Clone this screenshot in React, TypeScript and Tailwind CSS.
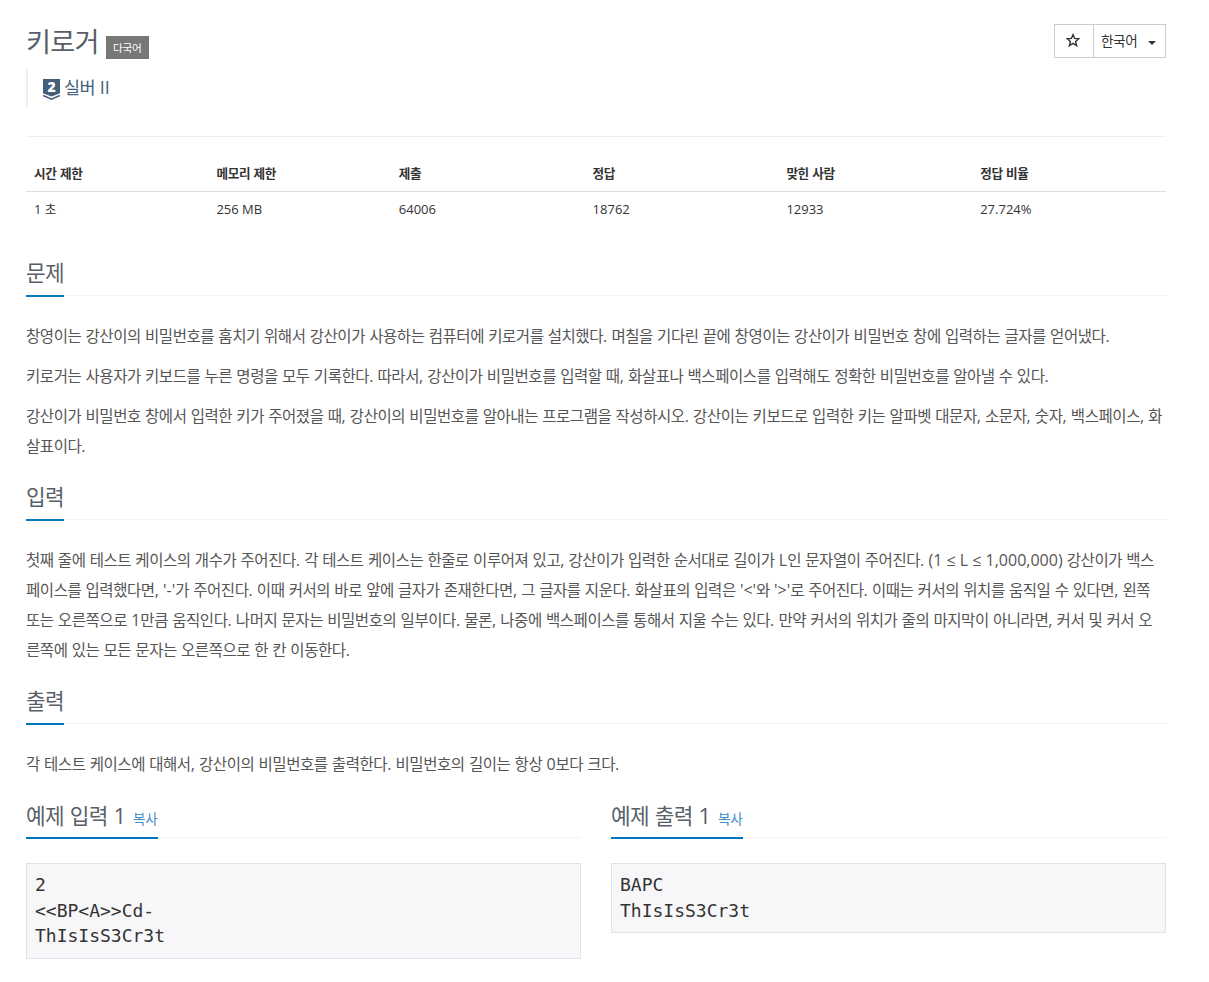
import React from "react";

function Ko({ children }: { children: string }) {
  const parts = children.split(/([\uac00-\ud7a3]+)/).filter(Boolean);
  return (
    <span className="whitespace-pre">
      {parts.map((p, i) =>
        /[\uac00-\ud7a3]/.test(p) ? (
          <span key={i} className="text-[0.97em] tracking-[-0.0283em]">{p}</span>
        ) : (
          <React.Fragment key={i}>{p}</React.Fragment>
        )
      )}
    </span>
  );
}

function Headline({ title, copy }: { title: string; copy?: boolean }) {
  return (
    <div className="flex h-[35px] border-b border-dotted border-[#e4e9f0]">
      <h2
        className={
          copy
            ? "flex h-[36px] items-baseline border-b-2 border-[#0076c0] text-[22px] leading-[24px] text-[#585f69]"
            : "flex h-[36px] items-baseline border-b-2 border-[#0076c0] text-[22px] leading-[22px] text-[#585f69]"
        }
      >
        <Ko>{title}</Ko>
        {copy && (
          <a href="#" className="ml-[7px] pr-px text-[14px] text-[#428bca]">
            <Ko>복사</Ko>
          </a>
        )}
      </h2>
    </div>
  );
}

function Para({ lines }: { lines: string[] }) {
  return (
    <p className="mb-[10px] text-base leading-[30px] text-[#555]">
      {lines.map((line) => (
        <span key={line} className="block">
          <Ko>{line}</Ko>
        </span>
      ))}
    </p>
  );
}

function Section({ title, paragraphs }: { title: string; paragraphs: string[][] }) {
  return (
    <section className="-mr-px pb-[14px]">
      <Headline title={title} />
      <div className="pt-[25px]">
        {paragraphs.map((p) => (
          <Para key={p[0]} lines={p} />
        ))}
      </div>
    </section>
  );
}

function Sample({ title, text }: { title: string; text: string }) {
  return (
    <section className="w-[555px]">
      <Headline title={title} copy />
      <pre className="mt-[25px] border border-[#e1e1e8] bg-[#f7f7f9] px-2 pt-2 pb-[9px] font-['DejaVu_Sans_Mono',monospace] text-[18px] leading-[25.7px] text-[#333]">
        {text}
      </pre>
    </section>
  );
}

const stats = [
  ["시간 제한", "1 초"],
  ["메모리 제한", "256 MB"],
  ["제출", "64006"],
  ["정답", "18762"],
  ["맞힌 사람", "12933"],
  ["정답 비율", "27.724%"],
];

const problem = [
  ["창영이는 강산이의 비밀번호를 훔치기 위해서 강산이가 사용하는 컴퓨터에 키로거를 설치했다. 며칠을 기다린 끝에 창영이는 강산이가 비밀번호 창에 입력하는 글자를 얻어냈다."],
  ["키로거는 사용자가 키보드를 누른 명령을 모두 기록한다. 따라서, 강산이가 비밀번호를 입력할 때, 화살표나 백스페이스를 입력해도 정확한 비밀번호를 알아낼 수 있다."],
  [
    "강산이가 비밀번호 창에서 입력한 키가 주어졌을 때, 강산이의 비밀번호를 알아내는 프로그램을 작성하시오. 강산이는 키보드로 입력한 키는 알파벳 대문자, 소문자, 숫자, 백스페이스, 화",
    "살표이다.",
  ],
];

const input = [
  [
    "첫째 줄에 테스트 케이스의 개수가 주어진다. 각 테스트 케이스는 한줄로 이루어져 있고, 강산이가 입력한 순서대로 길이가 L인 문자열이 주어진다. (1 ≤ L ≤ 1,000,000) 강산이가 백스",
    "페이스를 입력했다면, '-'가 주어진다. 이때 커서의 바로 앞에 글자가 존재한다면, 그 글자를 지운다. 화살표의 입력은 '<'와 '>'로 주어진다. 이때는 커서의 위치를 움직일 수 있다면, 왼쪽",
    "또는 오른쪽으로 1만큼 움직인다. 나머지 문자는 비밀번호의 일부이다. 물론, 나중에 백스페이스를 통해서 지울 수는 있다. 만약 커서의 위치가 줄의 마지막이 아니라면, 커서 및 커서 오",
    "른쪽에 있는 모든 문자는 오른쪽으로 한 칸 이동한다.",
  ],
];

const output = [["각 테스트 케이스에 대해서, 강산이의 비밀번호를 출력한다. 비밀번호의 길이는 항상 0보다 크다."]];

export default function App() {
  return (
    <main className="h-[982px] w-[1209px] overflow-hidden bg-white pl-[26px] pr-[43px] pt-6 font-['Open_Sans','Noto_Sans_CJK_KR',sans-serif] text-[#333]">
      <header className="flex h-[113px] justify-between border-b border-[#eee]">
        <div>
          <div className="flex h-[45px] items-start">
            <h1 className="text-[28px] leading-[35px] text-[#585f69]">
              <Ko>키로거</Ko>
            </h1>
            <span className="mt-3 ml-[7px] flex h-[23px] w-[43px] items-center justify-center bg-[#777] pt-px text-[11px] text-white">
              <Ko>다국어</Ko>
            </span>
          </div>
          <div className="flex h-[38px] items-center gap-1 border-l-2 border-[#eee] pl-[15px] text-[18px] text-[#435f7a]">
            <svg className="mt-1 h-[22px] w-[17px] overflow-visible" viewBox="0 0 17 22">
              <path fill="#435f7a" d="M0 0h17v14.2l-8.5 3.3L0 14.2z" />
              <path fill="none" stroke="#435f7a" strokeWidth="1.6" d="M.2 16.5l8.3 3.7 8.3-3.7" />
              <text x="8.5" y="13" textAnchor="middle" fill="#fff" fontSize="14" fontWeight="800" fontFamily="Open Sans">2</text>
            </svg>
            <span className="mb-0.5"><Ko>실버 II</Ko></span>
          </div>
        </div>
        <div className="flex h-[34px] w-[112px] border border-[#ccc] text-[14px]">
          <button className="flex w-[39px] items-center justify-center border-r border-[#ccc] pr-0.5 pb-0.5">
            <svg className="h-[14px] w-[14px]" viewBox="0 0 14 14" fill="none" stroke="#333" strokeWidth="1.4">
              <path d="M7 1.7l1.6 3.7 4.2.3-3.2 2.8 1 4.1L7 10.4l-3.6 2.2 1-4.1L1.2 5.7l4.2-.3z" />
            </svg>
          </button>
          <button className="flex flex-1 items-center pl-[7px]">
            <span><Ko>한국어</Ko></span>
            <span className="mt-1 ml-[11px] border-x-4 border-t-4 border-x-transparent border-t-[#333]" />
          </button>
        </div>
      </header>

      <table className="mt-[19px] w-full table-fixed text-left text-[13px] leading-[18.5px]">
        <colgroup>
          <col className="w-[182.4px]" />
          <col className="w-[182.4px]" />
          <col className="w-[193.8px]" />
          <col className="w-[193.8px]" />
          <col className="w-[193.8px]" />
          <col />
        </colgroup>
        <thead>
          <tr className="h-[35px] border-b border-[#ddd]">
            {stats.map(([h]) => (
              <th key={h} className="px-2 font-bold"><Ko>{h}</Ko></th>
            ))}
          </tr>
        </thead>
        <tbody>
          <tr className="h-[36px]">
            {stats.map(([h, v]) => (
              <td key={h} className="px-2"><Ko>{v}</Ko></td>
            ))}
          </tr>
        </tbody>
      </table>

      <div className="mt-[34px]">
        <Section title="문제" paragraphs={problem} />
        <Section title="입력" paragraphs={input} />
        <Section title="출력" paragraphs={output} />
      </div>

      <div className="flex items-start gap-[30px]">
        <Sample title="예제 입력 1" text={"2\n<<BP<A>>Cd-\nThIsIsS3Cr3t"} />
        <Sample title="예제 출력 1" text={"BAPC\nThIsIsS3Cr3t"} />
      </div>
    </main>
  );
}
